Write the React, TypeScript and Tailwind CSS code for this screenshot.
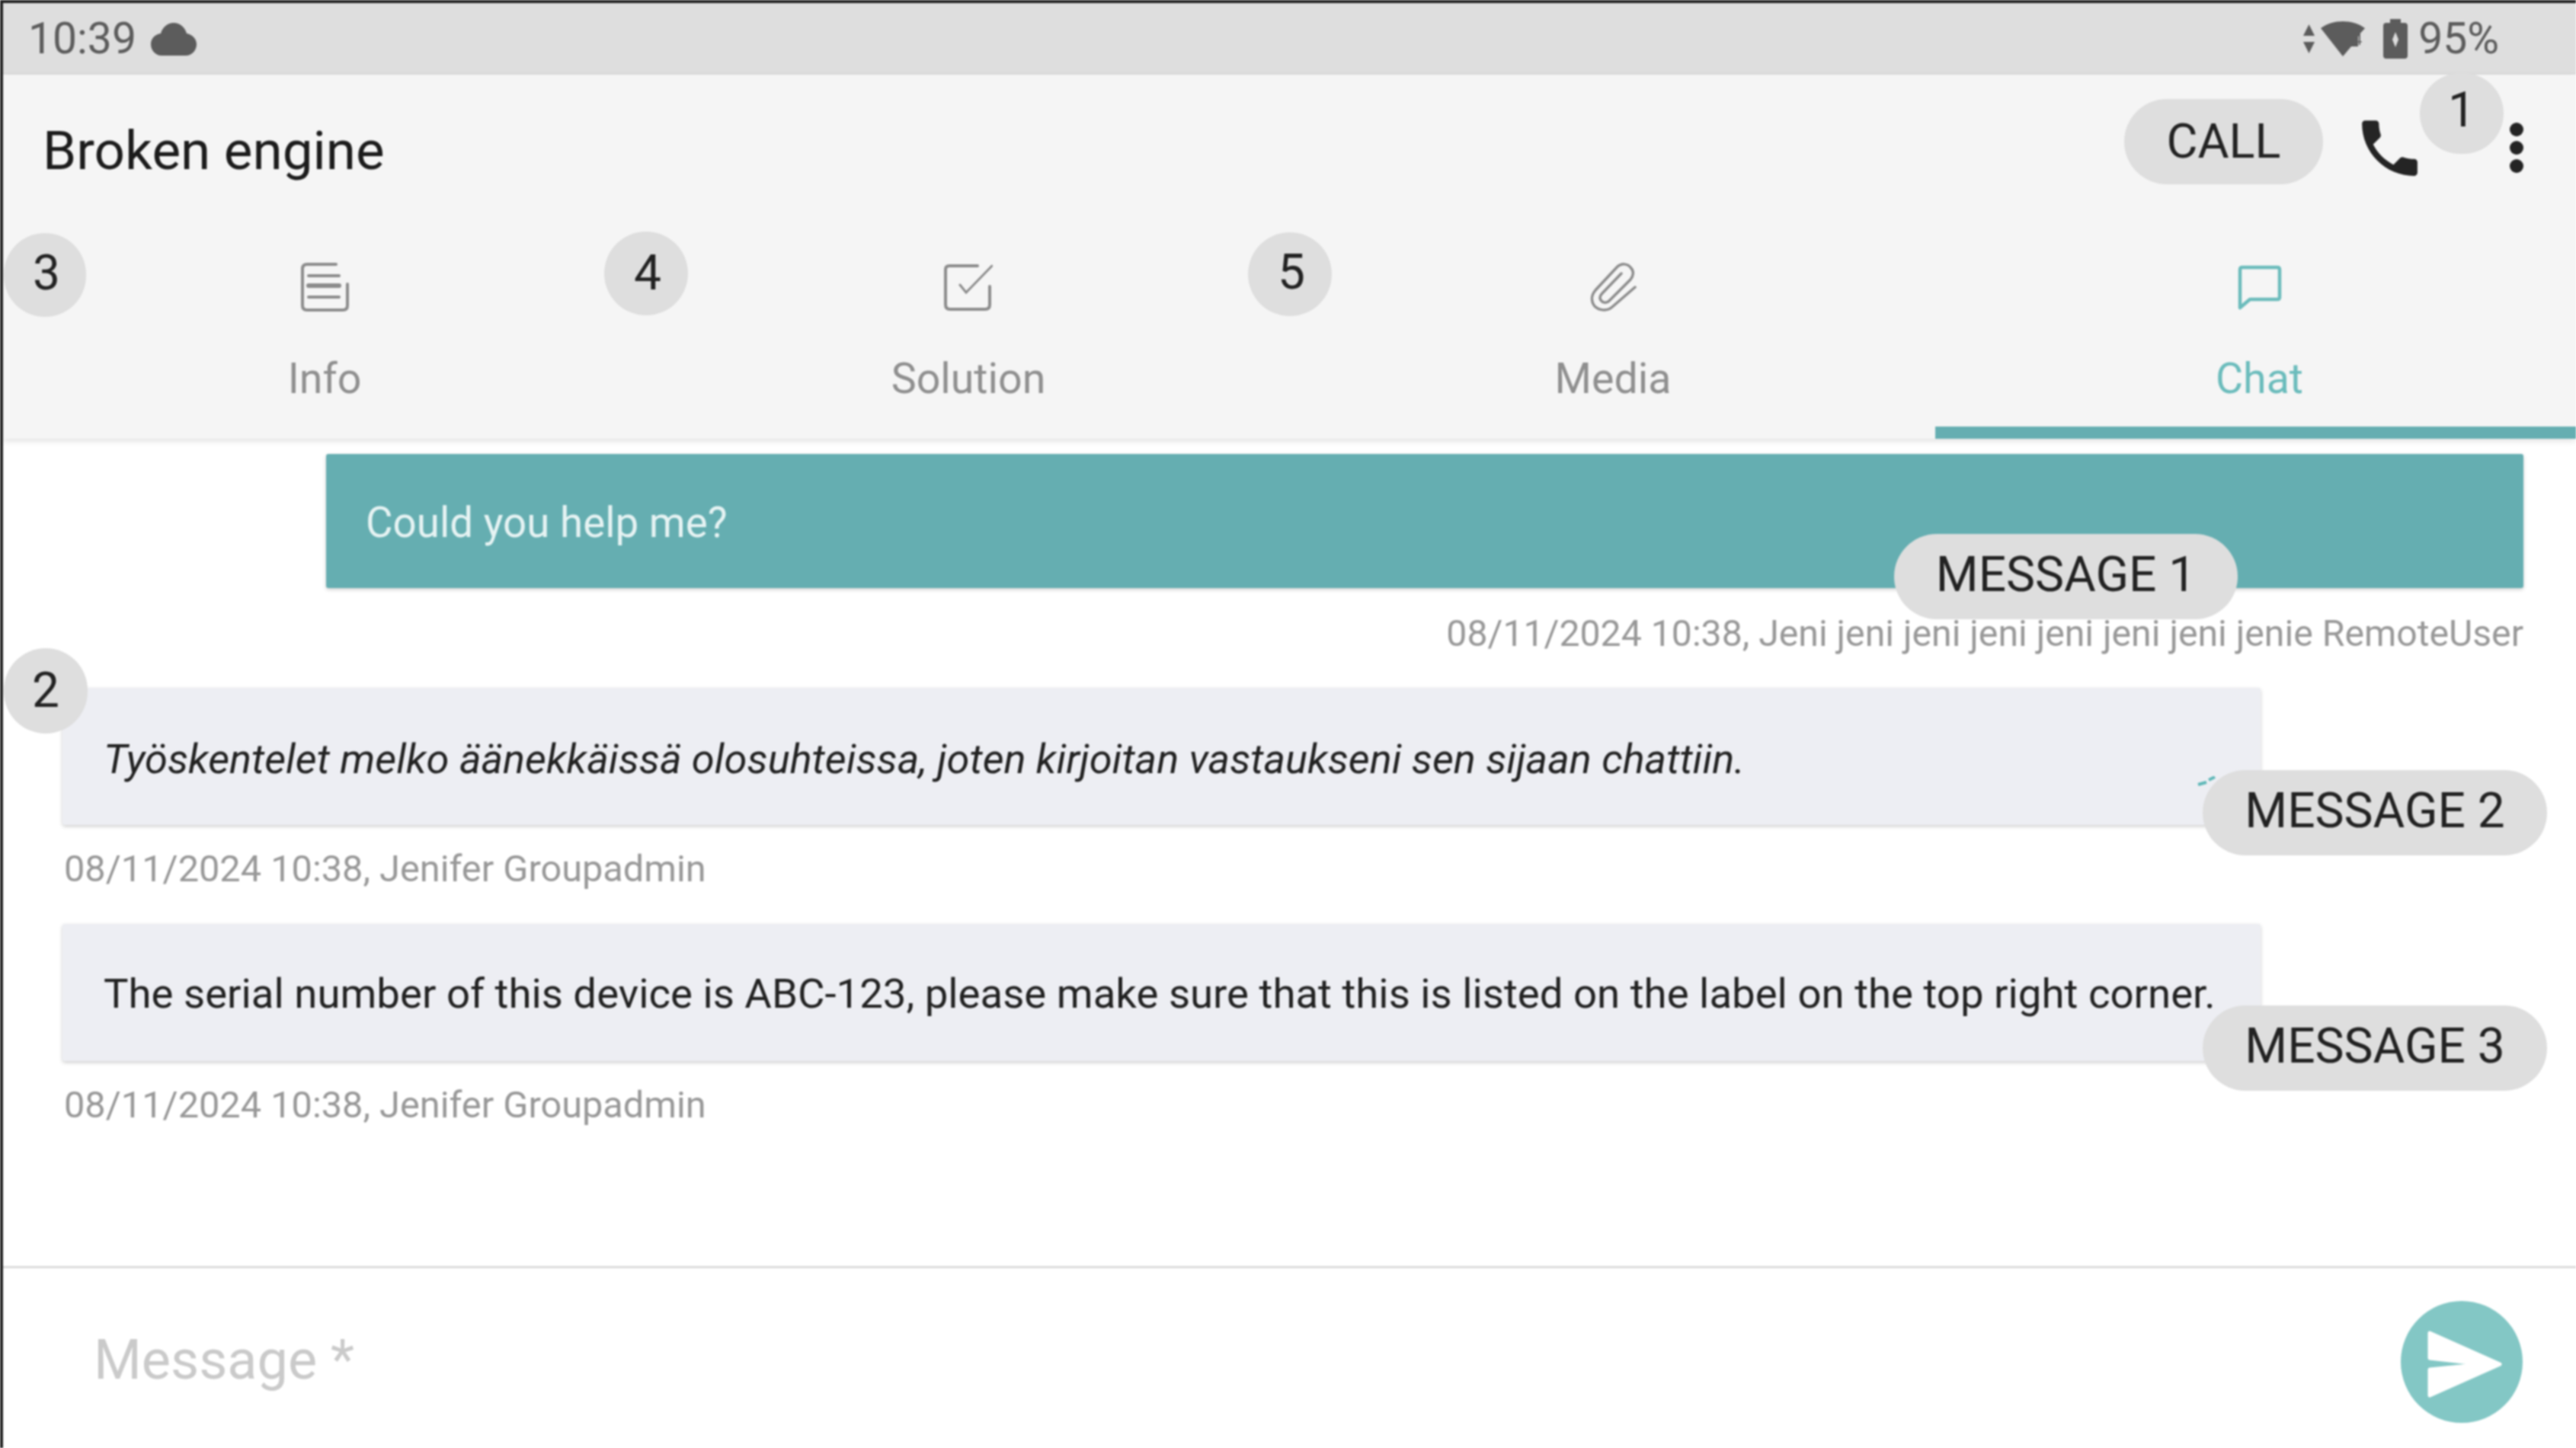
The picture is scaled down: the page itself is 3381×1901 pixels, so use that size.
const Anno = ({ className, children }: { className: string; children: string }) => (
  <div className={`absolute z-10 flex items-center justify-center rounded-full bg-[#dedede] text-[#222] ${className}`}>{children}</div>
);

const DocIcon = () => (
  <svg width="63" height="64" viewBox="0 0 63 64" fill="none" stroke="#8c8c8c" strokeWidth="4" strokeLinecap="round">
    <path d="M46 2H8Q2 2 2 8V56Q2 62 8 62H55Q61 62 61 56V28" />
    <path d="M10 17H50" />
    <path d="M10 30H50" strokeWidth="6" />
    <path d="M10 45H50" />
  </svg>
);

const CheckIcon = () => (
  <svg width="64" height="62" viewBox="0 0 64 62" fill="none" stroke="#8c8c8c" strokeWidth="4" strokeLinecap="round">
    <path d="M44 3H7Q2 3 2 8V54Q2 60 8 60H54Q60 60 60 54V30" />
    <path d="M21 28L29 38L63 3" strokeWidth="3" />
  </svg>
);

const ClipIcon = () => (
  <svg width="62" height="64" viewBox="0 0 62 64" fill="none" stroke="#8c8c8c" strokeWidth="3.5" strokeLinecap="round">
    <path d="M60 32L30 58C22 65 9 62 5 54C2 47 3 42 8 36L36 6C42 0 50 1 54 6C59 11 58 17 54 22L26 50C22 54 17 52 15 49C13 46 14 43 17 40L42 14" />
  </svg>
);

const ChatIcon = () => (
  <svg width="58" height="59" viewBox="0 0 58 59" fill="none" stroke="#6bbcbc" strokeWidth="4.5" strokeLinejoin="round">
    <path d="M6 3H52Q55 3 55 6V42Q55 45 52 45H16L3 56V6Q3 3 6 3Z" />
  </svg>
);

const tabs = [
  { label: "Info", icon: <DocIcon />, active: false, width: "w-[844px]" },
  { label: "Solution", icon: <CheckIcon />, active: false, width: "w-[846px]" },
  { label: "Media", icon: <ClipIcon />, active: false, width: "w-[846px]" },
  { label: "Chat", icon: <ChatIcon />, active: true, width: "w-[841px] pl-[10px]" },
];

const Meta = ({ className, children }: { className: string; children: string }) => (
  <div className={`h-[60px] leading-[60px] text-[#989898] ${className}`}>{children}</div>
);

export default function App() {
  return (
    <div className="relative flex h-[1901px] w-[3381px] flex-col overflow-hidden bg-[#222] pl-1 pt-1 blur-[1px] font-['Roboto',sans-serif]">
      <div className="flex h-[94px] shrink-0 items-center justify-between bg-[#dedede] pl-[33px] pr-[101px] text-[57px] text-[#5c5c5c]">
        <div className="flex items-center gap-[19px]">
          <span>10:39</span>
          <svg width="60" height="43" viewBox="0 0 60 43" fill="#5c5c5c">
            <path d="M30 0C38 0 45 6 47 14C54 15 60 21 60 28C60 36 54 43 46 43H14C6 43 0 36 0 28C0 21 5 15 13 14C15 6 22 0 30 0Z" />
          </svg>
        </div>
        <div className="flex items-center">
          <svg width="17" height="38" viewBox="0 0 17 38" fill="#5c5c5c">
            <path d="M8.5 0L16 15H1Z" />
            <path d="M8.5 38L1 23H16Z" />
          </svg>
          <svg className="ml-[7px]" width="58" height="46" viewBox="0 0 58 46" fill="#5c5c5c">
            <path d="M0 9C16-3 42-3 58 9L49 19V33H40L29 46Z" />
            <text x="43" y="31" fontSize="20" fill="#5c5c5c">4</text>
          </svg>
          <svg className="ml-[24px]" width="32" height="52" viewBox="0 0 32 52">
            <path d="M9 0H23V5H28Q32 5 32 9V48Q32 52 28 52H4Q0 52 0 48V9Q0 5 4 5H9Z" fill="#5c5c5c" />
            <path d="M16 17L20 27L16 37L12 27Z" fill="#dedede" />
          </svg>
          <span className="ml-[14px]">95%</span>
        </div>
      </div>

      <div className="relative z-[1] shrink-0 bg-[#f5f5f5] shadow-[0_3px_8px_rgba(0,0,0,0.12)]">
        <div className="flex h-[192px] items-center justify-between pl-[52px] pr-[69px]">
          <h1 className="mt-2 text-[71px] font-normal text-[#1c1c1c]">Broken engine</h1>
          <div className="flex items-center">
            <div className="mb-4 flex h-[112px] w-[261px] items-center justify-center rounded-full bg-[#dedede] text-[63px] text-[#222]">CALL</div>
            <svg className="ml-[39px]" width="97" height="97" viewBox="0 0 24 24" fill="#242424">
              <path d="M6.62 10.79c1.44 2.83 3.76 5.14 6.59 6.59l2.2-2.2c.27-.27.67-.36 1.02-.24 1.12.37 2.33.57 3.57.57.55 0 1 .45 1 1V20c0 .55-.45 1-1 1-9.39 0-17-7.61-17-17 0-.55.45-1 1-1h3.5c.55 0 1 .45 1 1 0 1.25.2 2.45.57 3.57.11.35.03.74-.25 1.02l-2.2 2.2z" />
            </svg>
            <div className="ml-[109px] flex flex-col gap-[6px]">
              <div className="h-[18px] w-[18px] rounded-full bg-[#242424]" />
              <div className="h-[18px] w-[18px] rounded-full bg-[#242424]" />
              <div className="h-[18px] w-[18px] rounded-full bg-[#242424]" />
            </div>
          </div>
        </div>
        <div className="flex h-[286px]">
          {tabs.map((t) => (
            <div
              key={t.label}
              className={`flex flex-col items-center border-b-[16px] pt-[55px] ${t.width} ${t.active ? "border-[#65aeb1] text-[#6bbcbc]" : "border-transparent text-[#8f8f8f]"}`}
            >
              <div className="flex h-[64px] items-center">{t.icon}</div>
              <div className="mt-[56px] text-[55.5px] leading-[66px]">{t.label}</div>
            </div>
          ))}
        </div>
      </div>

      <div className="flex-1 bg-white pt-5">
        <div className="ml-[424px] mr-[69px] flex h-[176px] items-center rounded-[3px] bg-[#65aeb1] pl-[52px] pt-1 text-[54.7px] text-[#e6f3f3] shadow-[0_2px_5px_rgba(0,0,0,0.2)]">
          Could you help me?
        </div>
        <Meta className="mr-[69px] mt-[30px] text-right text-[48.2px]">08/11/2024 10:38, Jeni jeni jeni jeni jeni jeni jeni jenie RemoteUser</Meta>

        <div className="relative ml-[78px] mt-[41px] flex h-[180px] w-[2885px] items-center rounded-[3px] bg-[#edeef3] pl-[54px] pt-2 text-[54.2px] italic text-[#222] shadow-[0_2px_5px_rgba(0,0,0,0.2)]">
          Työskentelet melko äänekkäissä olosuhteissa, joten kirjoitan vastaukseni sen sijaan chattiin.
          <svg className="absolute right-[58px] top-[116px]" width="26" height="14" viewBox="0 0 26 14" fill="none" stroke="#5fb8b8" strokeWidth="4">
            <path d="M2 11L13 8M16 5L24 1" />
          </svg>
        </div>
        <Meta className="ml-[80px] mt-7 text-[48.7px]">08/11/2024 10:38, Jenifer Groupadmin</Meta>

        <div className="ml-[78px] mt-[42px] flex h-[180px] w-[2885px] items-center rounded-[3px] bg-[#edeef3] pl-[54px] pt-1 text-[54.55px] text-[#222] shadow-[0_2px_5px_rgba(0,0,0,0.2)]">
          The serial number of this device is ABC-123, please make sure that this is listed on the label on the top right corner.
        </div>
        <Meta className="ml-[80px] mt-7 text-[48.7px]">08/11/2024 10:38, Jenifer Groupadmin</Meta>
      </div>

      <div className="flex h-[239px] shrink-0 items-center justify-between border-t-[3px] border-[#dcdcdc] bg-white pl-[119px] pr-[70px]">
        <span className="mt-[5px] text-[72px] text-[#cacaca]">Message *</span>
        <div className="mt-[10px] flex h-[160px] w-[160px] items-center justify-center rounded-full bg-[#83c7c5]">
          <svg className="ml-[8px] mt-[5px]" width="100" height="90" viewBox="0 0 100 90" fill="#fff" stroke="#fff" strokeWidth="5" strokeLinejoin="round">
            <path d="M4 4L96 45L4 86V52L74 45L4 37Z" />
          </svg>
        </div>
      </div>

      <Anno className="left-[3176px] top-[96px] h-[106px] w-[110px] pb-2 text-[64px]">1</Anno>
      <Anno className="left-[5px] top-[851px] h-[112px] w-[110px] text-[64px]">2</Anno>
      <Anno className="left-[5px] top-[306px] h-[110px] w-[108px] pb-1 pl-1 text-[64px]">3</Anno>
      <Anno className="left-[793px] top-[304px] h-[110px] w-[110px] pl-1 text-[64px]">4</Anno>
      <Anno className="left-[1638px] top-[305px] h-[110px] w-[110px] pb-1 pl-1 text-[64px]">5</Anno>
      <Anno className="left-[2486px] top-[701px] h-[112px] w-[451px] pb-1 text-[64px]">MESSAGE 1</Anno>
      <Anno className="left-[2891px] top-[1011px] h-[112px] w-[452px] pb-1 text-[64px]">MESSAGE 2</Anno>
      <Anno className="left-[2891px] top-[1320px] h-[112px] w-[452px] pb-1 text-[64px]">MESSAGE 3</Anno>
    </div>
  );
}
